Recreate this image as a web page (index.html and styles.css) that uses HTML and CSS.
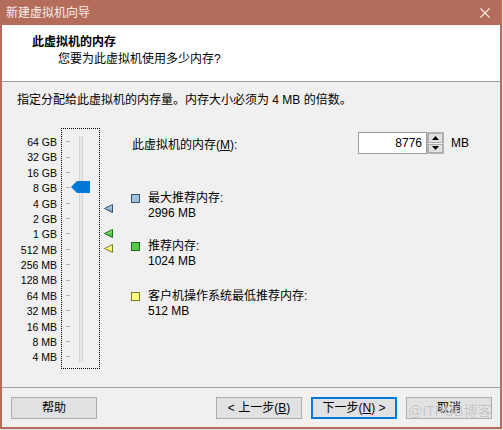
FILE: index.html
```html
<!DOCTYPE html>
<html lang="zh-CN">
<head>
<meta charset="utf-8">
<title>新建虚拟机向导</title>
<link rel="stylesheet" href="styles.css">
</head>
<body>
<div class="window">
  <div class="titlebar">
    <span class="title">新建虚拟机向导</span>
    <svg class="close" width="10" height="10" viewBox="0 0 10 10"><path d="M0.5 0.5L9.5 9.5M9.5 0.5L0.5 9.5" stroke="#fbeee9" stroke-width="1.1" fill="none"/></svg>
  </div>
  <div class="header">
    <div class="h-title">此虚拟机的内存</div>
    <div class="h-sub">您要为此虚拟机使用多少内存?</div>
  </div>
  <div class="content">
    <div class="intro">指定分配给此虚拟机的内存量。内存大小必须为 4 MB 的倍数。</div>
    <div class="main">
      <div class="labels">
        <span>64 GB</span><span>32 GB</span><span>16 GB</span><span>8 GB</span><span>4 GB</span>
        <span>2 GB</span><span>1 GB</span><span>512 MB</span><span>256 MB</span><span>128 MB</span>
        <span>64 MB</span><span>32 MB</span><span>16 MB</span><span>8 MB</span><span>4 MB</span>
      </div>
      <div class="slider">
        <div class="ticks">
          <i></i><i></i><i></i><i></i><i></i><i></i><i></i><i></i><i></i><i></i><i></i><i></i><i></i><i></i><i></i>
        </div>
        <div class="track"></div>
        <svg class="thumb" width="19" height="12" viewBox="0 0 19 12"><polygon points="0,6 6,0 19,0 19,12 6,12" fill="#0078d7"/></svg>
      </div>
      <div class="markers">
        <svg class="mk mk-max" width="9" height="9" viewBox="0 0 9 9">
          <defs><linearGradient id="gb" x1="0" y1="0" x2="0" y2="1"><stop offset="0" stop-color="#c9dcea"/><stop offset="1" stop-color="#6f97b8"/></linearGradient></defs>
          <polygon points="0.5,4.5 8.5,0.5 8.5,8.5" fill="url(#gb)" stroke="#30506e" stroke-width="1"/>
        </svg>
        <svg class="mk mk-rec" width="9" height="9" viewBox="0 0 9 9">
          <defs><linearGradient id="gg" x1="0" y1="0" x2="0" y2="1"><stop offset="0" stop-color="#9be58c"/><stop offset="1" stop-color="#2fae2a"/></linearGradient></defs>
          <polygon points="0.5,4.5 8.5,0.5 8.5,8.5" fill="url(#gg)" stroke="#177a17" stroke-width="1"/>
        </svg>
        <svg class="mk mk-min" width="9" height="9" viewBox="0 0 9 9">
          <defs><linearGradient id="gy" x1="0" y1="0" x2="0" y2="1"><stop offset="0" stop-color="#ffffc0"/><stop offset="1" stop-color="#f0ea40"/></linearGradient></defs>
          <polygon points="0.5,4.5 8.5,0.5 8.5,8.5" fill="url(#gy)" stroke="#80801c" stroke-width="1"/>
        </svg>
      </div>
      <div class="info">
        <div class="mem-row">
          <span class="mem-label">此虚拟机的内存(<u>M</u>):</span>
          <div class="input">8776</div>
          <div class="spin">
            <div class="spin-btn"><svg width="7" height="4" viewBox="0 0 7 4"><polygon points="3.5,0 7,4 0,4" fill="#000"/></svg></div>
            <div class="spin-btn"><svg width="7" height="4" viewBox="0 0 7 4"><polygon points="0,0 7,0 3.5,4" fill="#000"/></svg></div>
          </div>
          <span class="unit">MB</span>
        </div>
        <div class="legend g1">
          <span class="sq sq-max"></span>
          <div class="lg-text"><div>最大推荐内存:</div><div>2996 MB</div></div>
        </div>
        <div class="legend g2">
          <span class="sq sq-rec"></span>
          <div class="lg-text"><div>推荐内存:</div><div>1024 MB</div></div>
        </div>
        <div class="legend g3">
          <span class="sq sq-min"></span>
          <div class="lg-text"><div>客户机操作系统最低推荐内存:</div><div>512 MB</div></div>
        </div>
      </div>
    </div>
  </div>
  <div class="footer">
    <button class="btn">帮助</button>
    <button class="btn btn-prev">&lt; 上一步(<u>B</u>)</button>
    <button class="btn btn-default">下一步(<u>N</u>) &gt;</button>
    <button class="btn">取消</button>
  </div>
  <div class="watermark">@ITPUB博客</div>
</div>
</body>
</html>
```

FILE: styles.css
```css
* { box-sizing: border-box; }
html, body { margin: 0; padding: 0; }
body {
  width: 503px;
  height: 430px;
  overflow: hidden;
  background: #dde3e8;
  font-family: "Liberation Sans", "Noto Sans CJK SC", sans-serif;
  font-size: 12px;
  color: #000;
}
.window {
  position: relative;
  width: 502px;
  height: 429px;
  display: flex;
  flex-direction: column;
  background: #f0f0f0;
  border: 2px solid #b46c5b;
  border-top: 0;
}
.titlebar {
  height: 25px;
  flex: none;
  background: #b46c5b;
  display: flex;
  align-items: center;
  justify-content: space-between;
  padding: 0 10px 0 4px;
}
.title {
  color: #fbeee9;
  font-size: 12px;
  line-height: 16px;
}
.header {
  height: 57px;
  flex: none;
  background: #fff;
  border-bottom: 1px solid #a0a0a0;
  padding: 9px 0 0 30px;
}
.h-title {
  font-weight: bold;
  line-height: 16px;
}
.h-sub {
  margin: 1px 0 0 26px;
  line-height: 16px;
}
.content {
  flex: 1;
  padding: 10px 0 0 15px;
}
.intro {
  line-height: 16px;
}
.main {
  margin-top: 20px;
  display: flex;
  align-items: flex-start;
}
.labels {
  width: 40px;
  padding-top: 7px;
  display: flex;
  flex-direction: column;
  align-items: flex-end;
  font-size: 10.5px;
}
.labels span {
  height: 15.38px;
  line-height: 15.38px;
  white-space: nowrap;
}
.slider {
  position: relative;
  margin-left: 4px;
  width: 39px;
  height: 241px;
  border: 1px dotted #000;
  display: flex;
  padding-left: 4px;
}
.ticks {
  width: 4px;
  padding-top: 5px;
  display: flex;
  flex-direction: column;
}
.ticks i {
  height: 15.38px;
  display: flex;
  align-items: center;
}
.ticks i::before {
  content: "";
  width: 4px;
  height: 1px;
  background: #b4b4b4;
}
.track {
  margin: 7px 0 0 9px;
  width: 4px;
  height: 226px;
  background: #e7e7e7;
  border-left: 1px solid #d4d4d4;
  border-right: 1px solid #d4d4d4;
}
.thumb {
  position: absolute;
  left: 9px;
  top: 52px;
}
.markers {
  margin-left: 4px;
  width: 9px;
  padding-top: 76px;
  display: flex;
  flex-direction: column;
}
.mk { display: block; }
.mk-rec { margin-top: 16px; }
.mk-min { margin-top: 6px; }
.info {
  margin-left: 17px;
  padding-top: 4px;
  display: flex;
  flex-direction: column;
}
.mem-row {
  display: flex;
  align-items: center;
  height: 22px;
}
.mem-label {
  width: 228px;
  padding-left: 2px;
}
.input {
  width: 69px;
  height: 22px;
  border: 1px solid #9c9c9c;
  background: #fff;
  text-align: right;
  padding-right: 4px;
  line-height: 20px;
}
.spin {
  width: 17px;
  height: 22px;
  border: 1px solid #b4b4b4;
  display: flex;
  flex-direction: column;
  gap: 1px;
  padding: 0;
  background: #f0f0f0;
}
.spin-btn {
  flex: 1;
  background: #e1e1e1;
  border: 1px solid #adadad;
  display: flex;
  align-items: center;
  justify-content: center;
}
.unit {
  margin-left: 7px;
}
.legend {
  display: flex;
  padding-left: 1px;
}
.g1 { margin-top: 37px; }
.g2 { margin-top: 18px; }
.g3 { margin-top: 20px; }
.sq {
  width: 9px;
  height: 9px;
  margin: 3px 8px 0 0;
  flex: none;
}
.sq-max { background: #9cc4dc; border: 1px solid #35536f; }
.sq-rec { background: #58c84a; border: 1px solid #1b6e1b; }
.sq-min { background: #ffff80; border: 1px solid #7a7a2a; }
.lg-text div {
  line-height: 15px;
  white-space: nowrap;
}
.footer {
  height: 40px;
  flex: none;
  border-top: 1px solid #a0a0a0;
  padding: 9px 8px 8px 9px;
  display: flex;
  gap: 9px;
}
.btn {
  width: 86px;
  height: 22px;
  background: #e1e1e1;
  border: 1px solid #adadad;
  font: inherit;
  color: #000;
  padding: 0;
  line-height: 18px;
}
.btn-prev { margin-left: auto; }
.btn-default { border: 2px solid #0078d7; }
.watermark {
  position: absolute;
  left: 406px;
  top: 403px;
  font-size: 14px;
  line-height: 16px;
  color: rgba(175, 175, 175, 0.75);
  text-shadow: 0 0 1px #fff;
  white-space: nowrap;
  pointer-events: none;
}
```
